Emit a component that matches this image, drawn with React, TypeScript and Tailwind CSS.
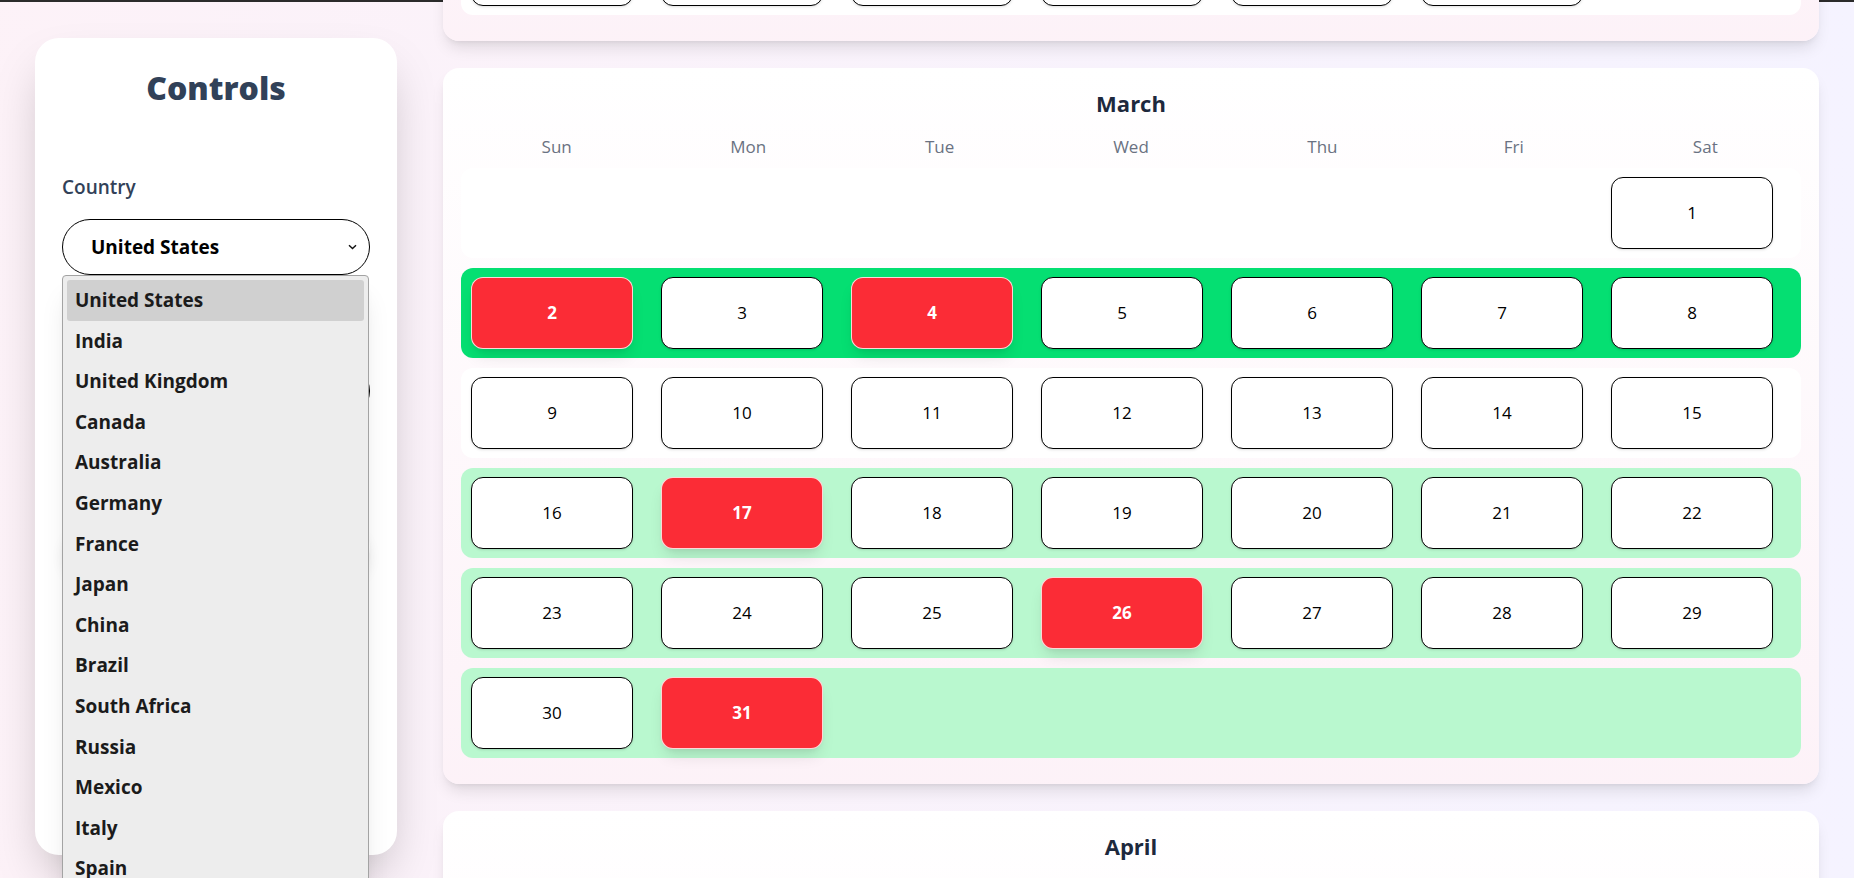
import { clsx } from 'clsx';

type RowTone = 'white' | 'green' | 'mint';

interface Week {
    days: (number | null)[];
    tone: RowTone;
}

interface Month {
    name: string;
    weeks: Week[];
    red: number[];
}

const WEEKDAYS = ['Sun', 'Mon', 'Tue', 'Wed', 'Thu', 'Fri', 'Sat'];

const COUNTRIES = [
    'United States',
    'India',
    'United Kingdom',
    'Canada',
    'Australia',
    'Germany',
    'France',
    'Japan',
    'China',
    'Brazil',
    'South Africa',
    'Russia',
    'Mexico',
    'Italy',
    'Spain',
    'Netherlands',
];

// builds the week rows for a month given the weekday of the 1st
function buildWeeks(firstDay: number, length: number, tones: RowTone[]): Week[] {
    const cells: (number | null)[] = [];
    for (let i = 0; i < firstDay; i++) cells.push(null);
    for (let d = 1; d <= length; d++) cells.push(d);
    while (cells.length % 7 !== 0) cells.push(null);
    const weeks: Week[] = [];
    for (let i = 0; i < cells.length; i += 7) {
        weeks.push({ days: cells.slice(i, i + 7), tone: tones[i / 7] ?? 'white' });
    }
    return weeks;
}

const MONTHS: Month[] = [
    {
        name: 'February',
        weeks: buildWeeks(6, 28, ['white', 'white', 'white', 'white', 'white']),
        red: [],
    },
    {
        name: 'March',
        weeks: buildWeeks(6, 31, ['white', 'green', 'white', 'mint', 'mint', 'mint']),
        red: [2, 4, 17, 26, 31],
    },
    {
        name: 'April',
        weeks: buildWeeks(2, 30, ['white', 'white', 'white', 'white', 'white']),
        red: [],
    },
];

const ROW_TONE: Record<RowTone, string> = {
    white: 'bg-white',
    green: 'bg-green-400',
    mint: 'bg-green-200',
};

function Chevron() {
    return (
        <svg width="9" height="6" viewBox="0 0 9 6" className="shrink-0">
            <path d="M1 1.2 L4.5 4.6 L8 1.2" fill="none" stroke="#111" strokeWidth="1.4" />
        </svg>
    );
}

function MonthCard({ month }: { month: Month }) {
    return (
        <section className="rounded-2xl bg-linear-to-b from-white to-pink-50 px-[18px] pt-[21px] pb-[26px] shadow-lg">
            <h3 className="text-center text-[22px] leading-[28px] font-bold text-slate-800">{month.name}</h3>
            <div className="mt-[18px] grid grid-cols-7 text-center text-[17px] leading-6 text-gray-500">
                {WEEKDAYS.map((d) => (
                    <div key={d}>{d}</div>
                ))}
            </div>
            <div className="mt-[9px] flex flex-col gap-[10px]">
                {month.weeks.map((week, wi) => (
                    <div
                        key={wi}
                        className={clsx(
                            'grid h-[90px] grid-cols-7 items-center gap-x-[28px] rounded-xl pl-[10px] pr-[28px]',
                            ROW_TONE[week.tone]
                        )}
                    >
                        {week.days.map((day, di) =>
                            day === null ? (
                                <div key={di} />
                            ) : month.red.includes(day) ? (
                                <div
                                    key={di}
                                    className="flex h-[72px] items-center justify-center rounded-xl border border-white/80 bg-red-500 text-[17px] font-bold text-white shadow-lg"
                                >
                                    {day}
                                </div>
                            ) : (
                                <div
                                    key={di}
                                    className="flex h-[72px] items-center justify-center rounded-xl border border-black bg-white text-[17px] text-black shadow-sm"
                                >
                                    {day}
                                </div>
                            )
                        )}
                    </div>
                ))}
            </div>
        </section>
    );
}

function Controls() {
    return (
        <aside className="relative mt-[36px] h-[817px] w-[362px] shrink-0 rounded-3xl bg-white px-[27px] pt-[30px] shadow-2xl">
            <h2 className="text-center text-[32px] leading-10 font-extrabold text-slate-700">Controls</h2>

            <label className="mt-[65px] block text-[19px] leading-7 font-semibold text-slate-700">Country</label>
            <div className="mt-[18px] flex h-[56px] items-center justify-between rounded-full border border-black bg-white pl-[28px] pr-[12px]">
                <span className="text-[19px] font-bold text-black">United States</span>
                <Chevron />
            </div>

            {/* year select, covered by the open list */}
            <div className="mt-[88px] flex h-[56px] items-center justify-end rounded-full border border-black bg-white pr-[12px]">
                <Chevron />
            </div>

            <div className="mt-[100px] h-[56px] w-full rounded-full bg-white shadow-lg" />

            {/* open native dropdown of the country select */}
            <div className="absolute top-[237px] left-[27px] w-[307px] rounded-[4px] border border-[#a3a3a3] bg-[#ededed] p-[4px] shadow-xl">
                {COUNTRIES.map((c, i) => (
                    <div
                        key={c}
                        className={clsx(
                            'flex h-[40.6px] items-center rounded-[3px] pl-[8px] text-[19px] font-bold text-[#1b1b1b]',
                            i === 0 && 'bg-[#d0d0d0]'
                        )}
                    >
                        {c}
                    </div>
                ))}
            </div>
        </aside>
    );
}

export default function App() {
    return (
        <div className="h-[878px] overflow-hidden bg-linear-to-r from-pink-50 to-violet-50 font-['Open_Sans',sans-serif]">
            <div className="h-[2px] bg-[#2b2b2b]" />
            <div className="flex gap-[46px] px-[35px]">
                <Controls />
                <main className="-mt-[577px] flex flex-1 flex-col gap-[27px]">
                    {MONTHS.map((m) => (
                        <MonthCard key={m.name} month={m} />
                    ))}
                </main>
            </div>
        </div>
    );
}
